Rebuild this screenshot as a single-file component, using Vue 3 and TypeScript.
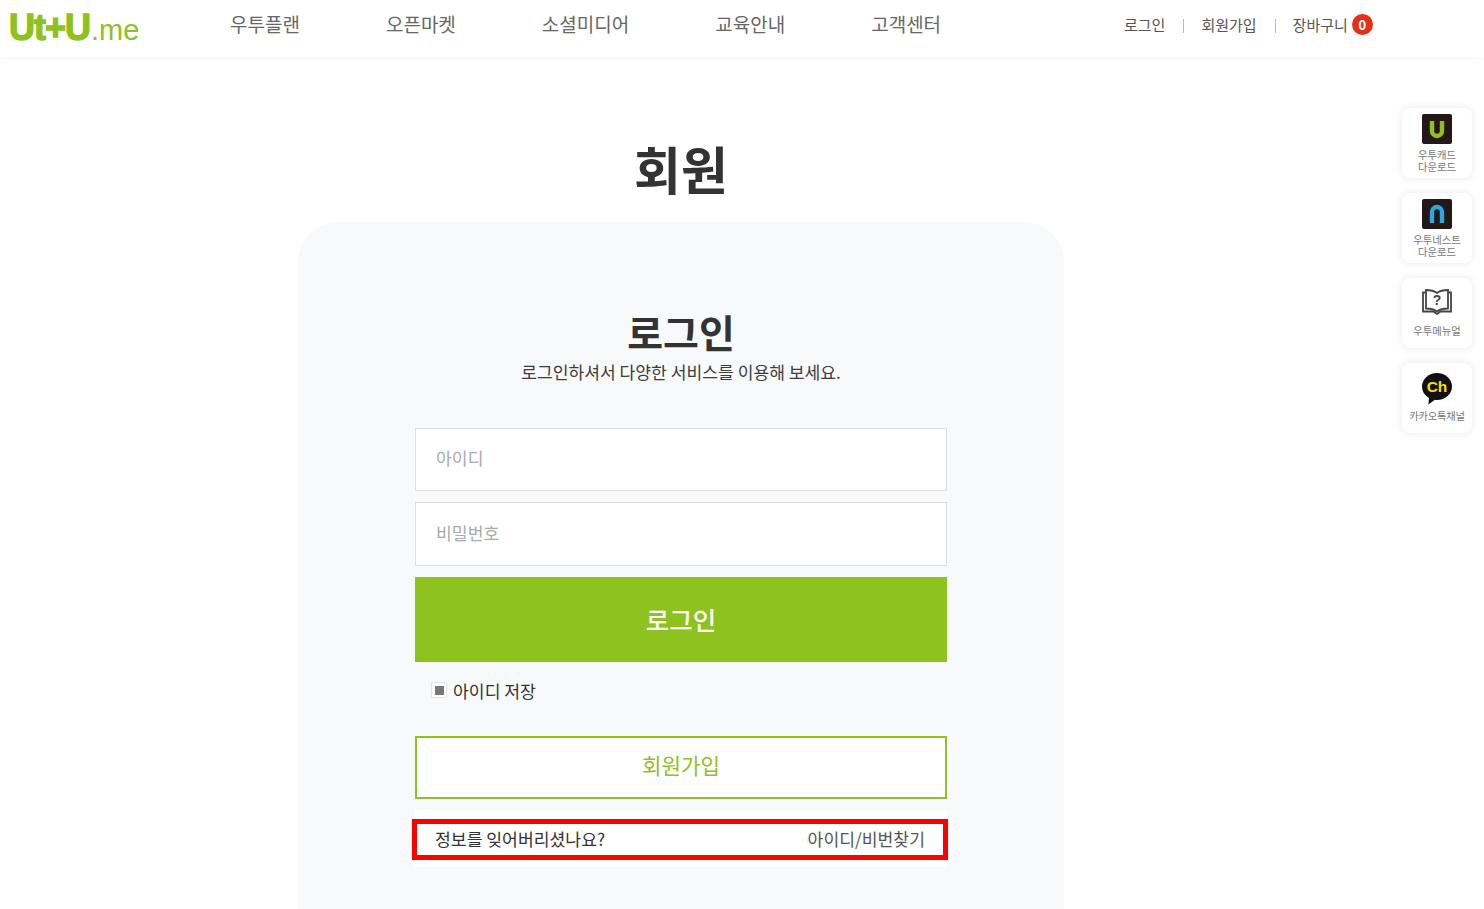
<script setup lang="ts">
const navItems: string[] = ['우투플랜', '오픈마켓', '소셜미디어', '교육안내', '고객센터']
</script>

<template>
  <div class="page">
    <header class="top">
      <a class="logo"><span class="logo-main">Ut+U</span><span class="logo-me">.me</span></a>
      <nav class="nav">
        <a v-for="item in navItems" :key="item">{{ item }}</a>
      </nav>
      <div class="util">
        <a>로그인</a>
        <i class="sep"></i>
        <a>회원가입</a>
        <i class="sep"></i>
        <a>장바구니</a>
        <b class="badge">0</b>
      </div>
    </header>

    <main class="main">
      <h1 class="title">회원</h1>
      <section class="card">
        <h2 class="card-title">로그인</h2>
        <p class="card-sub">로그인하셔서 다양한 서비스를 이용해 보세요.</p>
        <form class="form" @submit.prevent>
          <input class="field field-id" type="text" placeholder="아이디" />
          <input class="field" type="password" placeholder="비밀번호" />
          <button class="submit" type="submit">로그인</button>
          <label class="remember"><span class="check"><span></span></span>아이디 저장</label>
          <button class="join" type="button">회원가입</button>
          <div class="forgot-row">
            <div class="forgot">
              <span>정보를 잊어버리셨나요?</span>
              <a>아이디/비번찾기</a>
            </div>
          </div>
        </form>
      </section>
    </main>

    <aside class="rail">
      <a class="tile">
        <svg class="ico" viewBox="0 0 30 30" width="30" height="30">
          <rect width="30" height="30" rx="2" fill="#231815" />
          <path d="M10 7v10a5 5 0 0 0 10 0V7" fill="none" stroke="#8dc21f" stroke-width="4.400" />
        </svg>
        <span class="lbl">우투캐드<br />다운로드</span>
      </a>
      <a class="tile">
        <svg class="ico" viewBox="0 0 30 30" width="30" height="30">
          <rect width="30" height="30" rx="2" fill="#231815" />
          <path d="M10 24v-11a5 5 0 0 1 10 0V24" fill="none" stroke="#2ea7e0" stroke-width="4.400" />
        </svg>
        <span class="lbl">우투네스트<br />다운로드</span>
      </a>
      <a class="tile">
        <svg class="ico book" viewBox="0 0 30 26" width="30" height="26">
          <g fill="none" stroke="#444" stroke-width="1.800">
            <path d="M4 3.500H1v19h10.500l3.500 2.500 3.500-2.500H29v-19h-3" />
            <path d="M4 1c4.500 0 8 .8 11 3 3-2.200 6.500-3 11-3v18.500c-4.500 0-8 .8-11 3-3-2.200-6.500-3-11-3z" />
          </g>
          <text x="15" y="16" text-anchor="middle" class="q">?</text>
        </svg>
        <span class="lbl one">우투메뉴얼</span>
      </a>
      <a class="tile">
        <svg class="ico chat" viewBox="0 0 30 32" width="30" height="32">
          <ellipse cx="15" cy="13.500" rx="15" ry="13.500" fill="#111" />
          <path d="M7 23l-.500 8.500 8-6z" fill="#111" />
          <text x="15" y="19" text-anchor="middle" class="ch">Ch</text>
        </svg>
        <span class="lbl kakao">카카오톡채널</span>
      </a>
    </aside>
  </div>
</template>

<style>
html, body { margin: 0; padding: 0; background: #fff; overflow: hidden; }
</style>

<style scoped>
.page {
  position: relative;
  height: 909px;
  overflow: hidden;
  font-family: "Noto Sans CJK KR", "Noto Sans", sans-serif;
  color: #333;
  background: #fff;
}
.top {
  display: flex;
  align-items: flex-start;
  height: 57px;
  padding-left: 9px;
  box-shadow: 0 2px 6px rgba(0, 0, 0, 0.035);
}
.logo {
  display: flex;
  align-items: baseline;
  width: 221px;
  height: 48px;
  color: #8dc21f;
  font-family: "Liberation Sans", sans-serif;
  line-height: 48px;
  margin-top: 4px;
}
.logo-main {
  font-size: 36px;
  font-weight: 700;
  letter-spacing: -1px;
  -webkit-text-stroke: 1.300px #8dc21f;
}
.logo-me {
  font-size: 29px;
  font-weight: 400;
  margin-left: 1px;
}
.nav {
  display: flex;
  gap: 86px;
  width: 894px;
  font-size: 19px;
  color: #666;
  line-height: 48px;
  height: 48px;
}
.util {
  display: flex;
  align-items: center;
  font-size: 15px;
  color: #555;
  height: 48px;
}
.sep {
  width: 1px;
  height: 14px;
  margin: 3px 17px 0 18px;
  background: #bbb;
}
.badge {
  display: flex;
  align-items: center;
  justify-content: center;
  width: 21px;
  height: 21px;
  margin-left: 4px;
  border-radius: 50%;
  background: #e23019;
  color: #fff;
  font-size: 13px;
  font-weight: 700;
  line-height: 1;
}
.main {
  display: flex;
  flex-direction: column;
  align-items: center;
  width: 766px;
  margin-left: 298px;
}
.title {
  margin: 76px 0 0;
  font-size: 51px;
  font-weight: 700;
  line-height: 70px;
  color: #333;
}
.card {
  box-sizing: border-box;
  width: 766px;
  height: 760px;
  margin-top: 19px;
  padding-top: 81px;
  border-radius: 40px 40px 0 0;
  background: #f8f9fb;
  display: flex;
  flex-direction: column;
  align-items: center;
}
.card-title {
  margin: 0;
  font-size: 39px;
  font-weight: 700;
  line-height: 56px;
  color: #333;
}
.card-sub {
  margin: 0;
  font-size: 17.150px;
  line-height: 26px;
  color: #3c3c3c;
}
.form {
  display: flex;
  flex-direction: column;
  width: 532px;
  margin-top: 43px;
}
.field {
  box-sizing: border-box;
  height: 64px;
  margin-bottom: 11px;
  padding: 0 20px 4px;
  border: 1px solid #ddd;
  background: #fff;
  font: 400 17.200px "Noto Sans CJK KR", sans-serif;
  outline: none;
}
.field-id { height: 63px; }
.field::placeholder { color: #aaa; opacity: 1; }
.submit {
  height: 85px;
  border: 0;
  padding: 0 0 2px;
  background: #8dc21f;
  color: #fff;
  font: 500 25.500px "Noto Sans CJK KR", sans-serif;
}
.remember {
  box-sizing: border-box;
  display: flex;
  align-items: center;
  height: 58px;
  padding: 0 0 2px 16px;
  font-size: 17.200px;
  color: #333;
}
.check {
  box-sizing: border-box;
  display: flex;
  align-items: center;
  justify-content: center;
  width: 16px;
  height: 16px;
  margin-right: 6px;
  border: 1px solid #e4e4e4;
  background: #fff;
}
.check span {
  width: 9px;
  height: 9px;
  background: #777;
}
.join {
  box-sizing: border-box;
  height: 63px;
  margin-top: 16px;
  padding: 0 0 6px;
  border: 2px solid #8dc21f;
  background: #fff;
  color: #8dc21f;
  font: 400 21.200px "Noto Sans CJK KR", sans-serif;
}
.forgot-row {
  height: 57px;
  margin-top: 11px;
  padding-top: 9px;
  box-sizing: border-box;
  background: #fff;
}
.forgot {
  box-sizing: border-box;
  display: flex;
  align-items: center;
  justify-content: space-between;
  height: 41px;
  margin: 0 -1px 0 -3px;
  padding: 0 18px 2px 18px;
  border: 5px solid #f00;
  font-size: 17.200px;
  color: #333;
}
.forgot a { color: #555; }
.rail {
  position: absolute;
  top: 108px;
  left: 1402px;
  display: flex;
  flex-direction: column;
  gap: 15px;
}
.tile {
  box-sizing: border-box;
  width: 70px;
  height: 70px;
  padding-top: 6px;
  border-radius: 8px;
  background: #fff;
  box-shadow: 0 0 8px rgba(0, 0, 0, 0.09);
  display: flex;
  flex-direction: column;
  align-items: center;
  text-align: center;
  white-space: nowrap;
}
.lbl {
  font-size: 10.300px;
  line-height: 11.500px;
  color: #777;
  margin-top: 5px;
}
.ico { display: block; flex: none; }
.book { margin-top: 5px; }
.chat { margin-top: 4px; }
.one { margin-top: 10px; }
.kakao { margin-top: 5px; letter-spacing: -0.2px; }
.q { font: 700 14px "Liberation Sans", sans-serif; fill: #444; }
.ch { font: 700 15.500px "Liberation Sans", sans-serif; fill: #fae100; }
</style>
